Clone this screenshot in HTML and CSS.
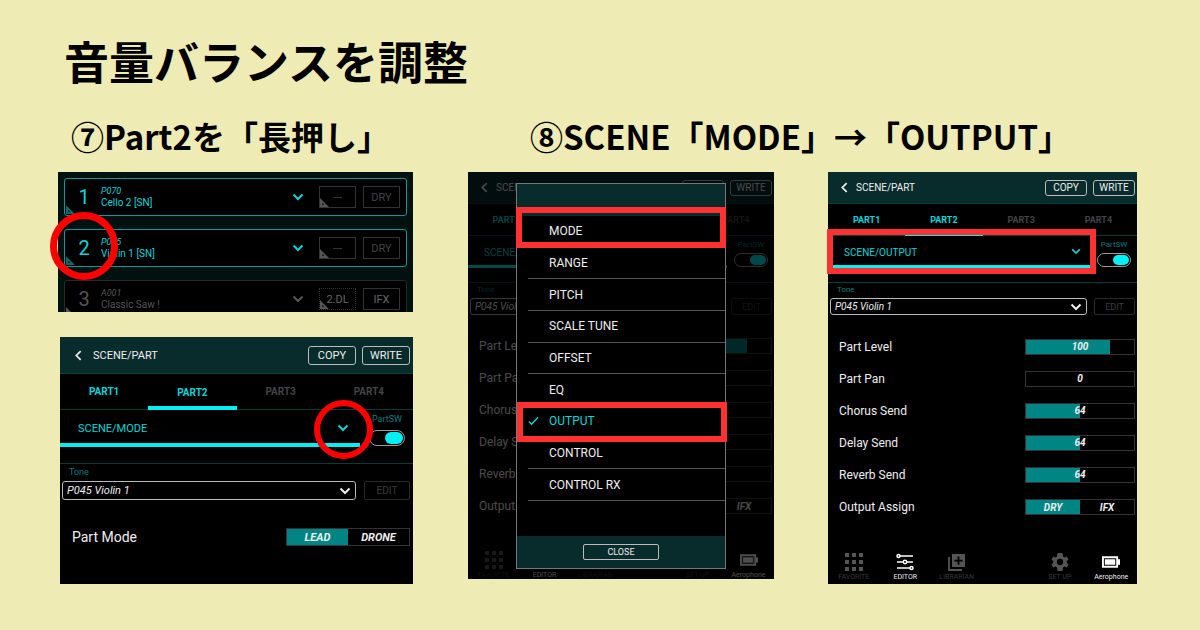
FILE: index.html
```html
<!DOCTYPE html>
<html lang="ja">
<head>
    <meta charset="utf-8">
    <meta name="viewport" content="width=device-width, initial-scale=1">
    <title>音量バランスを調整</title>
    <link rel="stylesheet" href="styles.css">
</head>
<body>
    <!-- shared icons -->
    <svg class="sprite" aria-hidden="true">
        <symbol id="down" viewBox="0 0 12 8"><path d="M1.500 1.500 6 6l4.500-4.500" fill="none" stroke="currentColor" stroke-width="2"/></symbol>
        <symbol id="back" viewBox="0 0 8 12"><path d="M6.500 1 1.500 6l5 5" fill="none" stroke="currentColor" stroke-width="2"/></symbol>
        <symbol id="corner" viewBox="0 0 10 10"><path d="M0 0v10h10zM2.500 5.500 5 7.500H2.500z" fill="currentColor" fill-rule="evenodd"/></symbol>
        <symbol id="grid" viewBox="0 0 18 18"><path d="M0 0h4v4H0zM7 0h4v4H7zM14 0h4v4h-4zM0 7h4v4H0zM7 7h4v4H7zM14 7h4v4h-4zM0 14h4v4H0zM7 14h4v4H7zM14 14h4v4h-4z" fill="currentColor"/></symbol>
        <symbol id="sliders" viewBox="0 0 18 18"><g fill="none" stroke="currentColor" stroke-width="1.500"><path d="M4 3h13M1 9h6M11 9h6M1 15h13"/><circle cx="2.500" cy="3" r="1.500"/><circle cx="9" cy="9" r="1.700"/><circle cx="15.500" cy="15" r="1.500"/></g></symbol>
        <symbol id="library" viewBox="0 0 18 18"><path d="M1 4v13h13" fill="none" stroke="currentColor" stroke-width="1.800"/><path d="M4 1h13v13H4zM9.600 3.500v3.200H6.400v1.800h3.200v3.200h1.800V8.500h3.200V6.700h-3.200V3.500z" fill="currentColor" fill-rule="evenodd"/></symbol>
        <symbol id="gear" viewBox="2 2 20 20"><path d="M19.400 13c.1-.6.1-1.300 0-2l2.100-1.600-2-3.500-2.500 1a7 7 0 0 0-1.700-1L15 3.200c-.1-.7-.4-1.200-1-1.200h-4c-.6 0-.9.5-1 1.200l-.3 2.700a7 7 0 0 0-1.700 1l-2.500-1-2 3.500L4.600 11a8 8 0 0 0 0 2l-2.100 1.600 2 3.500 2.500-1a7 7 0 0 0 1.700 1l.3 2.700c.1.700.4 1.200 1 1.200h4c.6 0 .9-.5 1-1.200l.3-2.700a7 7 0 0 0 1.700-1l2.500 1 2-3.500zM12 15.500a3.500 3.500 0 1 1 0-7 3.500 3.500 0 0 1 0 7z" fill="currentColor"/></symbol>
        <symbol id="battery" viewBox="0 0 19 18"><path d="M0 3h17v3h2v6h-2v3H0zM2 5v8h13V5zM3 6h11v6H3z" fill="currentColor" fill-rule="evenodd"/></symbol>
    </svg>

    <h1>音量バランスを調整</h1>
    <main class="steps">
        <section class="step">
            <h2>⑦Part2を「長押し」</h2>
            <div class="stack">
                <div class="parts">
                    <div class="part-list">
                        <div class="part">
                            <button class="num">1<svg class="corner"><use href="#corner"/></svg></button>
                            <button class="voice"><span><i>P070</i>Cello 2 [SN]</span><svg class="down"><use href="#down"/></svg></button>
                            <button class="fx">---<svg class="corner"><use href="#corner"/></svg></button>
                            <button class="fx">DRY</button>
                        </div>
                        <div class="part">
                            <button class="num">2<svg class="corner"><use href="#corner"/></svg></button>
                            <button class="voice"><span><i>P045</i>Violin 1 [SN]</span><svg class="down"><use href="#down"/></svg></button>
                            <button class="fx">---<svg class="corner"><use href="#corner"/></svg></button>
                            <button class="fx">DRY</button>
                        </div>
                        <div class="part off">
                            <button class="num">3<svg class="corner"><use href="#corner"/></svg></button>
                            <button class="voice"><span><i>A001</i>Classic Saw !</span><svg class="down"><use href="#down"/></svg></button>
                            <button class="fx dotted">2.DL<svg class="corner"><use href="#corner"/></svg></button>
                            <button class="fx">IFX</button>
                        </div>
                    </div>
                    <div class="ring ring-part"></div>
                </div>

                <div class="app large">
                    <header class="bar">
                        <button class="back" aria-label="Back"><svg><use href="#back"/></svg></button>
                        <span class="bar-title">SCENE/PART</span>
                        <button class="outline">COPY</button>
                        <button class="outline">WRITE</button>
                    </header>
                    <nav class="tabs">
                        <button class="on">PART1</button>
                        <button class="on current">PART2</button>
                        <button>PART3</button>
                        <button>PART4</button>
                    </nav>
                    <div class="scene">
                        <div class="pick scene-pick">
                            <select aria-label="Scene page"><option>SCENE/MODE</option></select>
                            <svg class="down"><use href="#down"/></svg>
                            <div class="ring ring-arrow"></div>
                        </div>
                        <label class="switch">PartSW<input type="checkbox" checked></label>
                    </div>
                    <div class="tone">
                        <label for="tone1">Tone</label>
                        <div class="tone-row">
                            <div class="pick tone-pick">
                                <select id="tone1"><option>P045 Violin 1</option></select>
                                <svg class="down"><use href="#down"/></svg>
                            </div>
                            <button class="edit">EDIT</button>
                        </div>
                    </div>
                    <fieldset class="param">
                        <legend>Part Mode</legend>
                        <div class="seg">
                            <label><input type="radio" name="mode" checked>LEAD</label>
                            <label><input type="radio" name="mode">DRONE</label>
                        </div>
                    </fieldset>
                </div>
            </div>
        </section>

        <section class="step">
            <h2>⑧SCENE「MODE」→「OUTPUT」</h2>
            <div class="pair">
                <div class="app behind">
                    <div class="dim">
                        <header class="bar">
                            <button class="back" aria-label="Back"><svg><use href="#back"/></svg></button>
                            <span class="bar-title">SCENE/PART</span>
                            <button class="outline">COPY</button>
                            <button class="outline">WRITE</button>
                        </header>
                        <nav class="tabs">
                            <button class="on">PART1</button>
                            <button class="on current">PART2</button>
                            <button>PART3</button>
                            <button>PART4</button>
                        </nav>
                        <div class="scene">
                            <div class="pick scene-pick">
                                <select aria-label="Scene page"><option>SCENE/OUTPUT</option></select>
                                <svg class="down"><use href="#down"/></svg>
                            </div>
                            <label class="switch">PartSW<input type="checkbox" checked></label>
                        </div>
                        <div class="tone">
                            <label for="tone2">Tone</label>
                            <div class="tone-row">
                                <div class="pick tone-pick">
                                    <select id="tone2"><option>P045 Violin 1</option></select>
                                    <svg class="down"><use href="#down"/></svg>
                                </div>
                                <button class="edit">EDIT</button>
                            </div>
                        </div>
                        <div class="params">
                            <div class="param"><label for="level2">Part Level</label><div class="slider"><input type="range" id="level2" max="127" value="100" style="--fill: 78%"></div></div>
                            <div class="param"><label for="pan2">Part Pan</label><div class="slider"><input type="range" id="pan2" min="-64" max="63" value="0"></div></div>
                            <div class="param"><label for="chorus2">Chorus Send</label><div class="slider"><input type="range" id="chorus2" max="127" value="64" style="--fill: 50%"></div></div>
                            <div class="param"><label for="delay2">Delay Send</label><div class="slider"><input type="range" id="delay2" max="127" value="64" style="--fill: 50%"></div></div>
                            <div class="param"><label for="reverb2">Reverb Send</label><div class="slider"><input type="range" id="reverb2" max="127" value="64" style="--fill: 50%"></div></div>
                            <fieldset class="param">
                                <legend>Output Assign</legend>
                                <div class="seg">
                                    <label><input type="radio" name="assign2" checked>DRY</label>
                                    <label><input type="radio" name="assign2">IFX</label>
                                </div>
                            </fieldset>
                        </div>
                        <nav class="dock">
                            <button><svg><use href="#grid"/></svg>FAVORITE</button>
                            <button class="lit"><svg><use href="#sliders"/></svg>EDITOR</button>
                            <button><svg><use href="#library"/></svg>LIBRARIAN</button>
                            <button class="setup"><svg><use href="#gear"/></svg>SET UP</button>
                            <button class="lit"><svg><use href="#battery"/></svg>Aerophone</button>
                        </nav>
                    </div>
                    <div class="menu">
                        <ul>
                            <li class="marked"><button>MODE</button></li>
                            <li><button>RANGE</button></li>
                            <li><button>PITCH</button></li>
                            <li><button>SCALE TUNE</button></li>
                            <li><button>OFFSET</button></li>
                            <li><button>EQ</button></li>
                            <li class="marked chosen"><button><svg viewBox="0 0 12 10"><path d="M1 5.500 4 8.500 11 1" fill="none" stroke="currentColor" stroke-width="1.500"/></svg>OUTPUT</button></li>
                            <li><button>CONTROL</button></li>
                            <li><button>CONTROL RX</button></li>
                        </ul>
                        <footer><button class="close">CLOSE</button></footer>
                    </div>
                </div>

                <div class="app">
                    <header class="bar">
                        <button class="back" aria-label="Back"><svg><use href="#back"/></svg></button>
                        <span class="bar-title">SCENE/PART</span>
                        <button class="outline">COPY</button>
                        <button class="outline">WRITE</button>
                    </header>
                    <nav class="tabs">
                        <button class="on">PART1</button>
                        <button class="on current">PART2</button>
                        <button>PART3</button>
                        <button>PART4</button>
                    </nav>
                    <div class="scene">
                        <div class="pick scene-pick marked">
                            <select aria-label="Scene page"><option>SCENE/OUTPUT</option></select>
                            <svg class="down"><use href="#down"/></svg>
                        </div>
                        <label class="switch">PartSW<input type="checkbox" checked></label>
                    </div>
                    <div class="tone">
                        <label for="tone3">Tone</label>
                        <div class="tone-row">
                            <div class="pick tone-pick">
                                <select id="tone3"><option>P045 Violin 1</option></select>
                                <svg class="down"><use href="#down"/></svg>
                            </div>
                            <button class="edit">EDIT</button>
                        </div>
                    </div>
                    <div class="params">
                        <div class="param"><label for="level">Part Level</label><div class="slider"><input type="range" id="level" max="127" value="100" style="--fill: 78%"><output>100</output></div></div>
                        <div class="param"><label for="pan">Part Pan</label><div class="slider"><input type="range" id="pan" min="-64" max="63" value="0"><output>0</output></div></div>
                        <div class="param"><label for="chorus">Chorus Send</label><div class="slider"><input type="range" id="chorus" max="127" value="64" style="--fill: 50%"><output>64</output></div></div>
                        <div class="param"><label for="delay">Delay Send</label><div class="slider"><input type="range" id="delay" max="127" value="64" style="--fill: 50%"><output>64</output></div></div>
                        <div class="param"><label for="reverb">Reverb Send</label><div class="slider"><input type="range" id="reverb" max="127" value="64" style="--fill: 50%"><output>64</output></div></div>
                        <fieldset class="param">
                            <legend>Output Assign</legend>
                            <div class="seg">
                                <label><input type="radio" name="assign" checked>DRY</label>
                                <label><input type="radio" name="assign">IFX</label>
                            </div>
                        </fieldset>
                    </div>
                    <nav class="dock">
                        <button><svg><use href="#grid"/></svg>FAVORITE</button>
                        <button class="lit"><svg><use href="#sliders"/></svg>EDITOR</button>
                        <button><svg><use href="#library"/></svg>LIBRARIAN</button>
                        <button class="setup"><svg><use href="#gear"/></svg>SET UP</button>
                        <button class="lit"><svg><use href="#battery"/></svg>Aerophone</button>
                    </nav>
                </div>
            </div>
        </section>
    </main>
</body>
</html>
```
FILE: styles.css
```css
* {
    box-sizing: border-box;
}

body {
    margin: 0;
    padding: 31px 63px 32px 58px;
    background: #efebb5;
    color: #000;
    font-family: "Noto Sans CJK JP", sans-serif;
}

h1, h2, ul, fieldset {
    margin: 0;
    padding: 0;
    border: 0;
}

h1 {
    padding-left: 6px;
    margin-bottom: 25px;
    font-size: 45px;
    line-height: 60px;
}

h2 {
    margin-bottom: 16px;
    font-size: 33px;
    line-height: 40px;
    white-space: nowrap;
}

button, select, input {
    margin: 0;
    padding: 0;
    border: 0;
    background: none;
    color: inherit;
    font: inherit;
}

.sprite {
    display: none;
}

/* two steps side by side */
.steps {
    display: grid;
    grid-template-columns: 355fr 669fr;
    gap: 55px;
}

.step {
    min-width: 0;
}

.step h2 {
    padding-left: 13px;
}

.step + .step h2 {
    padding-left: 62px;
}

.stack {
    display: grid;
    gap: 25px;
}

.stack .app {
    margin-left: 2px;
}

.pair {
    display: grid;
    grid-template-columns: 306fr 309fr;
    align-items: start;
    gap: 54px;
}

.down {
    width: 12px;
    height: 8px;
}

/* red markers over the screens */
.ring {
    position: absolute;
    border: 7px solid #f00;
    border-radius: 50%;
    pointer-events: none;
}

.ring-part {
    left: -8px;
    top: 40px;
    width: 68px;
    height: 68px;
}

.ring-arrow {
    right: -13px;
    top: -10px;
    width: 59px;
    height: 59px;
    border-width: 6px;
}

.marked {
    position: relative;
}

.marked::after {
    content: "";
    position: absolute;
    border: 6px solid #ff3131;
    pointer-events: none;
}

/* part list */
.parts {
    position: relative;
    font-family: Roboto, sans-serif;
}

.part-list {
    display: grid;
    gap: 13px;
    height: 140px;
    padding: 6px 6px 0;
    overflow: hidden;
    background: #001110;
}

.part {
    display: flex;
    align-items: center;
    gap: 7px;
    height: 38px;
    padding-right: 6px;
    border: 1px solid #0a9a99;
    border-radius: 3px;
    background: #000;
    color: #0cd5d8;
}

.num {
    position: relative;
    align-self: stretch;
    width: 36px;
    padding-left: 2px;
    font-size: 20px;
}

.corner {
    position: absolute;
    left: 1px;
    bottom: 1px;
    width: 9px;
    height: 9px;
    color: #10696a;
}

.fx .corner {
    left: 0;
    bottom: 0;
}

.voice {
    display: flex;
    flex: 1;
    align-items: center;
    justify-content: space-between;
    margin-right: 8px;
    margin-left: -7px;
    font-size: 10px;
    line-height: 11px;
    text-align: left;
}

.voice i {
    display: block;
    font-size: 9px;
}

.fx {
    position: relative;
    width: 37px;
    height: 22px;
    border: 1px solid #333;
    color: #444;
    font-size: 11px;
}

.fx .corner,
.off .corner {
    color: #555;
}

.dotted {
    border-style: dotted;
}

.off {
    border-color: #292929;
    color: #555;
}

.off .fx {
    color: #666;
}

/* app screen */
.app {
    display: flex;
    flex-direction: column;
    background: #000;
    color: #eee;
    font-family: Roboto, sans-serif;
    font-size: 12px;
}

.bar {
    display: flex;
    align-items: center;
    gap: 6px;
    height: 32px;
    padding: 0 2px 0 13px;
    border-bottom: 1px solid #0b3c3c;
    background: #082b2b;
    font-size: 10px;
}

.back {
    display: flex;
    width: 9px;
}

.back svg {
    width: 7px;
    height: 11px;
}

.bar-title {
    flex: 1;
}

.outline {
    width: 42px;
    height: 16px;
    border: 1px solid #bbb;
    border-radius: 3px;
}

.tabs {
    display: grid;
    grid-template-columns: repeat(4, 1fr);
    height: 32px;
    border-bottom: 1px solid #0b3c3c;
    color: #444;
    font-size: 9px;
    font-weight: bold;
}

.tabs .on {
    color: #0cd5d8;
}

.tabs .current {
    margin-bottom: -1px;
    border-top: 3px solid transparent;
    border-bottom: 3px solid #00f0f3;
}

.pick {
    display: grid;
    align-items: center;
}

.pick select,
.pick .down {
    grid-area: 1 / 1;
}

.pick select {
    width: 100%;
    height: 100%;
    appearance: none;
}

.pick .down {
    justify-self: end;
    pointer-events: none;
}

.scene {
    display: flex;
    gap: 7px;
    height: 47px;
    padding-right: 6px;
    border-bottom: 1px solid #0b3c3c;
}

.scene-pick {
    position: relative;
    flex: 1;
    height: 32px;
    padding-top: 2px;
    border-bottom: 3px solid #00f0f3;
    color: #0cd5d8;
    font-size: 10px;
}

.scene-pick select {
    padding: 2px 0 0 16px;
}

.scene-pick .down {
    width: 10px;
    height: 7px;
    margin-right: 9px;
}

.scene-pick.marked::after {
    inset: -7px -6px -9px -1px;
}

.switch {
    width: 34px;
    padding-top: 4px;
    color: #087c7d;
    font-size: 8px;
    line-height: 9px;
    text-align: center;
    white-space: nowrap;
}

.switch input {
    display: flex;
    justify-content: end;
    width: 34px;
    height: 14px;
    margin-top: 4px;
    padding: 1px;
    border: 1px solid #999;
    border-radius: 7px;
    appearance: none;
}

.switch input::before {
    content: "";
    width: 16px;
    border-radius: 5px;
    background: #00f0f3;
}

.tone {
    padding: 2px 2px 0;
    color: #087c7d;
    font-size: 8px;
    line-height: 10px;
}

.tone > label {
    display: block;
    padding-left: 7px;
}

.tone-row {
    display: flex;
    gap: 7px;
    margin-top: 3px;
}

.tone-pick {
    flex: 1;
    height: 17px;
    border: 1px solid #bbb;
    border-radius: 3px;
    color: #eee;
    font-size: 10px;
    font-style: italic;
}

.tone-pick select {
    padding-left: 4px;
}

.tone-pick .down {
    margin-right: 4px;
}

.edit {
    width: 41px;
    border: 1px solid #292929;
    border-radius: 2px;
    color: #3c3c3c;
    font-size: 9px;
}

.params {
    padding-top: 16px;
}

.param {
    display: grid;
    grid-template-columns: 1fr 110px;
    align-items: center;
    height: 32px;
    padding: 0 2px 0 11px;
}

.param legend {
    float: left;
    padding: 0;
}

.slider,
.seg {
    display: grid;
    height: 16px;
    border: 1px solid #333;
    font-size: 10px;
    font-style: italic;
    font-weight: bold;
}

.slider input {
    grid-area: 1 / 1;
    width: 100%;
    height: 100%;
    background: linear-gradient(to right, #008484 var(--fill, 0%), transparent 0);
    appearance: none;
}

.slider input::-webkit-slider-thumb {
    width: 0;
    height: 14px;
    appearance: none;
}

.slider output {
    grid-area: 1 / 1;
    line-height: 14px;
    text-align: center;
    pointer-events: none;
}

.seg {
    grid-template-columns: 1fr 1fr;
}

.seg label {
    display: grid;
    place-items: center;
}

.seg label:has(:checked) {
    background: #008484;
}

.seg input {
    width: 0;
    height: 0;
    position: absolute;
    appearance: none;
}

.dock {
    display: grid;
    grid-template-columns: repeat(6, 1fr);
    margin-top: 30px;
    padding-bottom: 2px;
    color: #444;
    font-size: 7px;
    line-height: 9px;
}

.dock button {
    display: grid;
    justify-items: center;
    gap: 2px;
    color: #383838;
}

.dock .lit {
    color: #eee;
}

.dock .setup {
    grid-column: 5;
}

.dock svg {
    width: 18px;
    height: 18px;
    color: #555;
}

.dock .lit svg {
    color: #fff;
}

/* bigger capture of the same screen */
.large .bar {
    height: 37px;
    padding: 0 3px 0 15px;
    font-size: 11px;
}

.large .back {
    width: 12px;
}

.large .outline {
    width: 48px;
    height: 19px;
}

.large .tabs {
    height: 36px;
    font-size: 10px;
}

.large .tabs .current {
    border-width: 4px;
}

.large .scene {
    gap: 9px;
    height: 54px;
    padding-right: 8px;
}

.large .scene-pick {
    height: 37px;
    border-bottom-width: 4px;
    font-size: 11px;
}

.large .scene-pick select {
    padding-left: 18px;
}

.large .scene-pick .down {
    width: 12px;
    height: 8px;
    margin-right: 11px;
}

.large .switch {
    width: 36px;
    padding-top: 5px;
    font-size: 9px;
}

.large .switch input {
    width: 36px;
    height: 16px;
    margin-top: 6px;
    border-radius: 8px;
}

.large .switch input::before {
    width: 18px;
    border-radius: 6px;
}

.large .tone {
    padding: 3px 3px 0 2px;
    font-size: 9px;
}

.large .tone-row {
    gap: 8px;
    margin-top: 4px;
}

.large .tone-pick {
    height: 19px;
    font-size: 11px;
}

.large .edit {
    width: 46px;
    font-size: 10px;
}

.large .param {
    grid-template-columns: 1fr 124px;
    margin: 21px 0 31px;
    padding: 0 3px 0 12px;
    height: 32px;
    font-size: 14px;
}

.large .seg {
    height: 18px;
    font-size: 11px;
}

.large fieldset.param {
    margin: 28px 0 24px;
    height: 32px;
}

/* page menu on top of the dimmed screen */
.behind {
    position: relative;
}

.dim {
    margin-bottom: -3px;
    opacity: .3;
}

.dim .params {
    padding-top: 15px;
}

.dim .dock {
    margin-top: 29px;
}

.menu {
    position: absolute;
    inset: 11px 48px 10px 48px;
    display: flex;
    flex-direction: column;
    border: 1px solid #777;
    background: #000;
}

.menu ul {
    display: grid;
    grid-template-rows: repeat(9, 1fr);
    height: 317px;
    padding-left: 11px;
    border-top: 32px solid #082b2b;
    list-style: none;
}

.menu li {
    border-bottom: 1px solid #555;
}

.menu li button {
    display: flex;
    align-items: center;
    width: 100%;
    height: 100%;
    padding-left: 21px;
}

.menu .marked::after {
    inset: -9px -1px -1px -12px;
}

.menu .chosen.marked::after {
    inset: -4px -2px -5px -11px;
}

.chosen {
    color: #0cd5d8;
}

.chosen svg {
    width: 11px;
    height: 10px;
    margin-right: 10px;
    margin-left: -21px;
}

.menu footer {
    display: grid;
    place-items: center;
    height: 32px;
    margin-top: auto;
    background: #082b2b;
}

.close {
    width: 76px;
    height: 16px;
    border: 1px solid #bbb;
    border-radius: 2px;
    font-size: 9px;
}
```
